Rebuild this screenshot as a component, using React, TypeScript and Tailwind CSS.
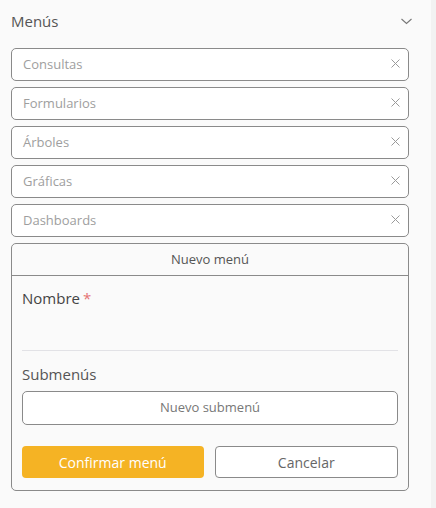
const MENUS = ['Consultas', 'Formularios', 'Árboles', 'Gráficas', 'Dashboards'];

function XIcon() {
  return (
    <svg width="9" height="9" viewBox="0 0 9 9" className="shrink-0 mb-[3px]">
      <path d="M0.5 0.5 L8.5 8.5 M8.5 0.5 L0.5 8.5" stroke="#9a9a9a" strokeWidth="1" />
    </svg>
  );
}

export default function App() {
  return (
    <div
      className="w-full h-[508px] bg-[#fafafa] flex"
      style={{ fontFamily: '"Open Sans", "Noto Sans", sans-serif' }}
    >
      <div className="w-[431px] pl-[11px] pr-[22px] flex flex-col gap-[6px]">
        <div className="h-[42px] flex items-center justify-between">
          <span className="text-[15px] text-[#555]">Menús</span>
          <svg width="11" height="7" viewBox="0 0 11 7" className="mr-[-3px] mt-[1px]">
            <path d="M0.5 1 L5.5 5.5 L10.5 1" fill="none" stroke="#777" strokeWidth="1.1" />
          </svg>
        </div>

        {MENUS.map((m) => (
          <div
            key={m}
            className="h-[33px] rounded-[5px] border border-[#8a8a8a] bg-white flex items-center justify-between pl-[11px] pr-[8px]"
          >
            <span className="text-[13px] text-[#9e9e9e]">{m}</span>
            <XIcon />
          </div>
        ))}

        <div className="rounded-[5px] border border-[#8a8a8a] bg-[#fafafa] flex flex-col">
          <div className="h-[32px] border-b border-[#8a8a8a] flex items-center justify-center text-[13px] text-[#555]">
            Nuevo menú
          </div>
          <div className="px-[10px] pt-[12px] pb-[12px] flex flex-col">
            <div className="text-[15px] text-[#444] leading-[20px]">
              Nombre<span className="ml-[3px] text-[#e57373]">*</span>
            </div>
            <div className="h-[43px] border-b border-[#e2e2e6]" />
            <div className="mt-[13px] text-[15px] text-[#555] leading-[20px]">Submenús</div>
            <button className="mt-[7px] h-[34px] rounded-[5px] border border-[#8a8a8a] bg-white text-[13px] text-[#777]">
              Nuevo submenú
            </button>
            <div className="mt-[21px] flex gap-[11px]">
              <button className="flex-1 h-[32px] rounded-[4px] bg-[#f5b324] text-white text-[14px]">
                Confirmar menú
              </button>
              <button className="flex-1 h-[32px] rounded-[4px] border border-[#8a8a8a] bg-white text-[14px] text-[#666]">
                Cancelar
              </button>
            </div>
          </div>
        </div>
      </div>
      <div className="flex-1 bg-[#f2f2f2]" />
    </div>
  );
}
